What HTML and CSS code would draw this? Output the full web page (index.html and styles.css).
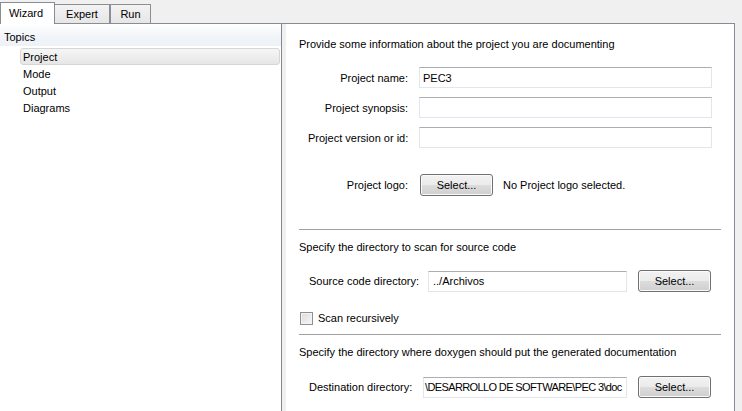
FILE: index.html
```html
<!DOCTYPE html>
<html>
<head>
<meta charset="utf-8">
<link rel="stylesheet" href="styles.css">
</head>
<body>
<div class="tabbar">
  <div class="tab active">Wizard</div>
  <div class="tab tab-expert">Expert</div>
  <div class="tab tab-run">Run</div>
</div>
<div class="pane">
  <div class="tree">
    <div class="tree-header">Topics</div>
    <div class="tree-items">
      <div class="item selected">Project</div>
      <div class="item">Mode</div>
      <div class="item">Output</div>
      <div class="item">Diagrams</div>
    </div>
  </div>
  <div class="content">
    <div class="heading first">Provide some information about the project you are documenting</div>
    <div class="form">
      <label class="lbl">Project name:</label>
      <input class="field" type="text" value="PEC3">
      <label class="lbl">Project synopsis:</label>
      <input class="field" type="text" value="">
      <label class="lbl">Project version or id:</label>
      <input class="field" type="text" value="">
      <label class="lbl logo-lbl">Project logo:</label>
      <div class="logo-cell">
        <button class="btn logo-btn">Select...</button>
        <span class="logo-text">No Project logo selected.</span>
      </div>
    </div>
    <div class="sep sep-1"></div>
    <div class="heading">Specify the directory to scan for source code</div>
    <div class="dir-row src-row">
      <label class="dir-lbl src-lbl">Source code directory:</label>
      <input class="field dir-field src-field" type="text" value="../Archivos">
      <button class="btn dir-btn">Select...</button>
    </div>
    <div class="check-row">
      <span class="checkbox"></span>
      <span>Scan recursively</span>
    </div>
    <div class="sep sep-2"></div>
    <div class="heading">Specify the directory where doxygen should put the generated documentation</div>
    <div class="dir-row dest-row">
      <label class="dir-lbl dest-lbl">Destination directory:</label>
      <div class="field dir-field dest-field"><span class="dest-text">\DESARROLLO DE SOFTWARE\PEC 3\doc</span></div>
      <button class="btn dir-btn">Select...</button>
    </div>
  </div>
</div>
</body>
</html>
```

FILE: styles.css
```css
* { box-sizing: border-box; }
html, body {
  margin: 0;
  padding: 0;
  width: 742px;
  height: 411px;
  overflow: hidden;
  background: #f0f0f0;
  font-family: "Liberation Sans", Arial, sans-serif;
  font-size: 11px;
  color: #000;
}

/* Tabs */
.tabbar {
  height: 23px;
  display: flex;
  align-items: flex-end;
  position: relative;
  z-index: 2;
}
.tab {
  height: 19px;
  border: 1px solid #8c8e94;
  border-bottom: none;
  background: linear-gradient(#f3f3f3, #e6e6e6);
  display: flex;
  align-items: center;
  justify-content: center;
}
.tab.active {
  width: 55px;
  height: 22px;
  margin-bottom: -1px;
  background: #fff;
  border-color: #898c95;
  padding-bottom: 2px;
  padding-right: 3px;
}
.tab-expert { width: 55px; border-left: none; }
.tab-run { width: 41px; }

/* Pane */
.pane {
  height: 388px;
  width: 735px;
  border-top: 1px solid #898c95;
  border-right: 1px solid #898c95;
  display: flex;
  gap: 4px;
  background: #f0f0f0;
}
.tree {
  flex: none;
  width: 282px;
  background: #fff;
  border-right: 1px solid #828790;
}
.tree-header {
  height: 22px;
  padding-left: 4px;
  padding-top: 3px;
  display: flex;
  align-items: center;
  background: linear-gradient(#ffffff, #f1f4f8 60%, #eef2f7);
}
.tree-items {
  padding-top: 2px;
  padding-left: 20px;
  padding-right: 1px;
}
.item {
  height: 17px;
  line-height: 18px;
  padding-left: 3px;
}
.item.selected {
  background: linear-gradient(#f6f6f6, #e6e6e6);
  border: 1px solid #d6d6d6;
  border-radius: 3px;
  line-height: 16px;
  padding-left: 2px;
}

/* Right content */
.content {
  flex: 1;
  min-width: 0;
  background: #fff;
  padding: 0 13px;
}
.heading {
  line-height: 14px;
  height: 14px;
  margin-top: 10px;
  white-space: nowrap;
}
.heading.first { margin-top: 13px; }

.form {
  margin-top: 16px;
  padding-left: 9px;
  padding-right: 9px;
  display: grid;
  grid-template-columns: 100px minmax(0, 1fr);
  column-gap: 11px;
  row-gap: 9px;
  align-items: center;
}
.lbl {
  text-align: right;
  white-space: nowrap;
}
.field {
  height: 21px;
  border: 1px solid #e2e5ea;
  border-top-color: #abadb3;
  background: #fff;
  font: inherit;
  padding: 0 3px;
  margin: 0;
  outline: none;
  width: 100%;
  min-width: 0;
  color: #000;
}
.logo-lbl { margin-top: 17px; }
.logo-cell {
  margin-top: 17px;
  display: flex;
  align-items: center;
  gap: 10px;
  padding-left: 1px;
}
.btn {
  height: 22px;
  width: 73px;
  border: 1px solid #707070;
  border-radius: 3px;
  background: linear-gradient(#f2f2f2 0%, #ebebeb 50%, #dddddd 50%, #cfcfcf 100%);
  box-shadow: inset 0 0 0 1px #fbfbfb;
  font: inherit;
  color: #000;
  padding: 0;
  margin: 0;
  flex: none;
}
.sep {
  height: 1px;
  background: #a0a0a0;
}
.sep-1 { margin-top: 33px; }
.sep-2 { margin-top: 9px; }

.dir-row {
  display: flex;
  align-items: center;
  padding-left: 10px;
  padding-right: 10px;
  height: 22px;
}
.src-row { margin-top: 16px; }
.dest-row { margin-top: 17px; }
.dir-lbl { white-space: nowrap; flex: none; }
.src-lbl { width: 119px; }
.dest-lbl { width: 114px; }
.dir-field { flex: 1 1 0; width: auto; min-width: 0; }
.src-field { padding-left: 4px; }
.dest-field {
  display: flex;
  align-items: center;
  overflow: hidden;
  white-space: nowrap;
  padding: 0 3px 0 1px;
}
.dest-text { flex: none; letter-spacing: -0.62px; }
.dir-btn { margin-left: 11px; }

.check-row {
  margin-top: 19px;
  height: 14px;
  display: flex;
  align-items: center;
  gap: 5px;
  padding-left: 1px;
}
.checkbox {
  width: 13px;
  height: 13px;
  border: 1px solid #8f8f8f;
  background: linear-gradient(135deg, #dcdcdc, #f6f6f6);
  box-shadow: inset 0 0 0 1px #f4f4f4;
  flex: none;
}
```
